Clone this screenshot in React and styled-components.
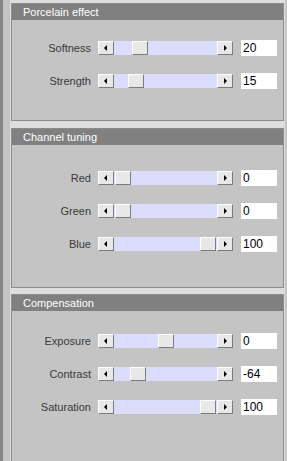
import React from "react";
import styled, { createGlobalStyle } from "styled-components";

const GlobalStyle = createGlobalStyle`
  html, body {
    margin: 0;
    padding: 0;
    background: #c4c4c4;
  }
  body {
    font-family: "Liberation Sans", Arial, sans-serif;
  }
`;

const Page = styled.div`
  width: 287px;
  height: 461px;
  overflow: hidden;
  box-sizing: border-box;
  background: #c4c4c4;
  border-left: 3px solid #858585;
  padding-left: 7px;
  display: flex;
`;

const Column = styled.div`
  width: 275px;
  box-sizing: border-box;
  background: #dedede;
  padding: 3px 1px 0 1px;
  display: flex;
  flex-direction: column;
`;

const Panel = styled.div`
  border: 1px solid #8c8c8c;
  background: #c4c4c4;
  margin-bottom: ${({ gap }) => gap || 0}px;
  flex-shrink: 0;
`;

const Header = styled.div`
  height: 16px;
  background: #808080;
  color: #ffffff;
  font-size: 11px;
  line-height: 16px;
  padding-left: 11px;
`;

const Body = styled.div`
  display: flex;
  flex-direction: column;
  gap: 17px;
  padding-top: ${({ top }) => top}px;
  padding-bottom: ${({ bottom }) => bottom}px;
`;

const Row = styled.div`
  display: flex;
  align-items: center;
  height: 16px;
`;

const Label = styled.div`
  width: 79px;
  text-align: right;
  font-size: 11px;
  color: #3a3a3a;
  margin-right: 7px;
`;

const Slider = styled.div`
  display: flex;
  width: 135px;
  height: 14px;
`;

const Bevel = styled.div`
  box-sizing: border-box;
  height: 14px;
  background: #e8e8e8;
  border-top: 1px solid #ffffff;
  border-left: 1px solid #ffffff;
  border-right: 1px solid #7c7c7c;
  border-bottom: 1px solid #7c7c7c;
`;

const ArrowButton = styled(Bevel)`
  width: 16px;
  display: flex;
  align-items: center;
  justify-content: center;
  flex-shrink: 0;
`;

const Track = styled.div`
  position: relative;
  flex: 1;
  background: #dcdcfc;
`;

const Thumb = styled(Bevel)`
  position: absolute;
  top: 0;
  width: 16px;
`;

const ValueBox = styled.div`
  width: 36px;
  height: 16px;
  margin-left: 8px;
  background: #ffffff;
  color: #000000;
  font-size: 12px;
  line-height: 16px;
  padding-left: 2px;
  box-sizing: border-box;
`;

function Arrow({ dir }) {
  return (
    <svg width="4" height="6" viewBox="0 0 4 6">
      {dir === "left" ? (
        <polygon points="3,0 3,6 0,3" fill="#000" />
      ) : (
        <polygon points="1,0 1,6 4,3" fill="#000" />
      )}
    </svg>
  );
}

function SliderRow({ label, value, min, max }) {
  const frac = (value - min) / (max - min);
  const left = Math.round(1 + frac * 85);
  return (
    <Row>
      <Label>{label}</Label>
      <Slider>
        <ArrowButton><Arrow dir="left" /></ArrowButton>
        <Track>
          <Thumb style={{ left }} />
        </Track>
        <ArrowButton><Arrow dir="right" /></ArrowButton>
      </Slider>
      <ValueBox>{value}</ValueBox>
    </Row>
  );
}

const groups = [
  {
    title: "Porcelain effect",
    top: 20,
    bottom: 31,
    gap: 7,
    rows: [
      { label: "Softness", value: 20, min: 0, max: 100 },
      { label: "Strength", value: 15, min: 0, max: 100 },
    ],
  },
  {
    title: "Channel tuning",
    top: 25,
    bottom: 35,
    gap: 6,
    rows: [
      { label: "Red", value: 0, min: 0, max: 100 },
      { label: "Green", value: 0, min: 0, max: 100 },
      { label: "Blue", value: 100, min: 0, max: 100 },
    ],
  },
  {
    title: "Compensation",
    top: 22,
    bottom: 120,
    gap: 0,
    rows: [
      { label: "Exposure", value: 0, min: -100, max: 100 },
      { label: "Contrast", value: -64, min: -100, max: 100 },
      { label: "Saturation", value: 100, min: -100, max: 100 },
    ],
  },
];

export default function App() {
  return (
    <>
      <GlobalStyle />
      <Page>
        <Column>
          {groups.map((g) => (
            <Panel key={g.title} gap={g.gap}>
              <Header>{g.title}</Header>
              <Body top={g.top} bottom={g.bottom}>
                {g.rows.map((r) => (
                  <SliderRow key={r.label} {...r} />
                ))}
              </Body>
            </Panel>
          ))}
        </Column>
      </Page>
    </>
  );
}
